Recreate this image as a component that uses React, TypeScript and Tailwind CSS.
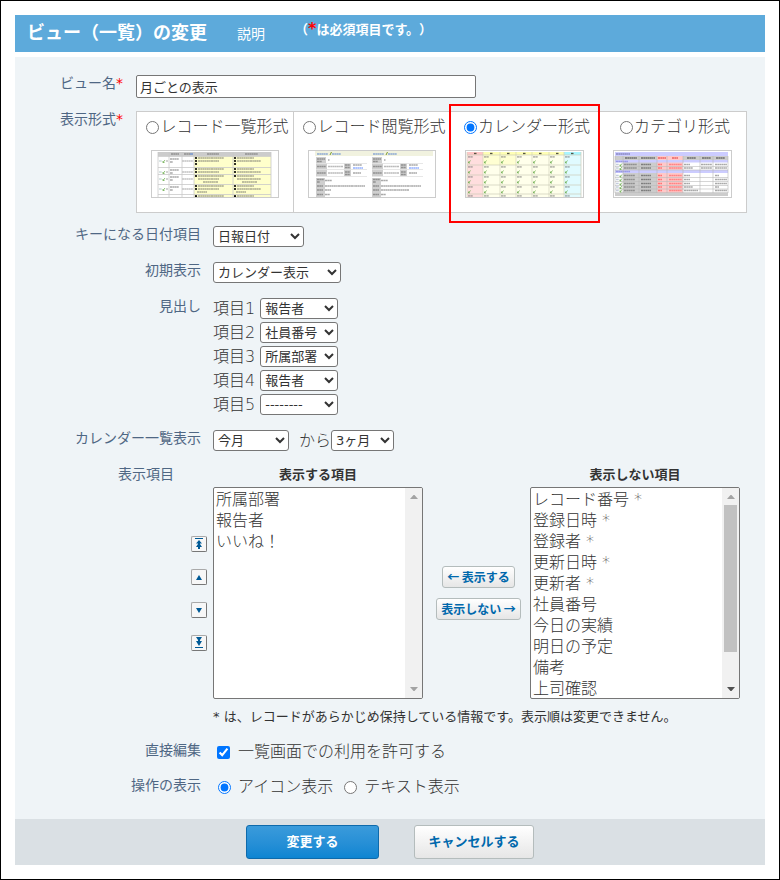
import type { ReactNode } from "react";

const FORM_LABEL = "shrink-0 text-right text-sm leading-4 text-[#4f6784]";
const SELECT =
  "h-[21px] rounded-[3px] border border-[#767676] bg-white pl-0 text-[13px] leading-4 font-normal text-[#333]";

const HEADINGS = ["報告者", "社員番号", "所属部署", "報告者", "--------"];
const SHOWN = ["所属部署", "報告者", "いいね！"];
const HIDDEN = [
  "レコード番号 *",
  "登録日時 *",
  "登録者 *",
  "更新日時 *",
  "更新者 *",
  "社員番号",
  "今日の実績",
  "明日の予定",
  "備考",
  "上司確認",
  "いいね！した人",
  "コメント",
  "添付ファイル",
];

function Scribble({ x, y, w, color = "#555" }: { x: number; y: number; w: number; color?: string }) {
  return (
    <path d={`M${x} ${y}h${w}`} stroke={color} strokeWidth="1.7" strokeDasharray="2.2 .3 1.5 .3" opacity=".5" />
  );
}

function Pencil({ x, y }: { x: number; y: number }) {
  return <path d={`M${x} ${y + 2.5}l2-2.5M${x} ${y + 1}v1.5h1.5`} stroke="#6fae52" strokeWidth=".8" fill="none" />;
}

function ListThumb() {
  const cols = [6, 17, 30, 42, 81, 119];
  const rows = [5, 16, 23, 33, 43];
  return (
    <svg width="126" height="46" viewBox="0 0 126 46" aria-hidden="true">
      <rect x="6" y="1" width="113" height="4" fill="#ccc" />
      <rect x="42" y="5" width="77" height="41" fill="#ffffcb" />
      <Scribble x={19} y={3} w={8} />
      <Scribble x={32} y={3} w={6} />
      <path d="M38 3h3" stroke="#47c" />
      <Scribble x={55} y={3} w={12} />
      <Scribble x={93} y={3} w={13} />
      {rows.map((y, i) => (
        <g key={y}>
          <path d={`M6 ${y}.5h113`} stroke="#c9c9c9" strokeWidth=".8" />
          {i < 4 && (
            <>
              <Scribble x={7} y={y + 5} w={3} color="#9bb" />
              <Pencil x={11} y={y + 4} />
              <Scribble x={14} y={y + 5} w={2} color="#888" />
              <Scribble x={18} y={y + 3} w={9} />
              <Scribble x={18} y={y + 6} w={3} />
              <Scribble x={30} y={y + 5} w={11} color="#888" />
            </>
          )}
          {[43, 82].map((x) => (
            <g key={x}>
              <circle cx={x + 1} cy={y + 2} r="1.1" />
              <Scribble x={x + 3} y={y + 2} w={x === 43 ? 26 : 17} />
              {i < 4 && (
                <>
                  {i !== 2 && <circle cx={x + 1} cy={y + 5} r="1.1" />}
                  <Scribble x={x + 3} y={y + 5} w={x === 43 ? 21 : 24} />
                </>
              )}
              {i === 0 && <circle cx={x + 1} cy={y + 8} r="1.1" />}
              {i === 2 && <Scribble x={x + 8} y={y + 8} w={15} />}
              {i === 3 && <Scribble x={x + 2} y={y + 8} w={10} />}
            </g>
          ))}
        </g>
      ))}
      {cols.map((x) => (
        <path key={x} d={`M${x} 1v45`} stroke="#c9c9c9" strokeWidth=".8" />
      ))}
    </svg>
  );
}

function DetailThumb() {
  return (
    <svg width="126" height="46" viewBox="0 0 126 46" aria-hidden="true">
      <rect x="6" y="0" width="118" height="5" fill="#f1f2df" />
      {[7, 63].map((x) => (
        <g key={x}>
          <Scribble x={x + 1} y={3} w={11} color="#2a62c9" />
          <path d={`M${x + 14} 4l1.5-3`} stroke="#7a9a2a" />
          <Scribble x={x + 16} y={3} w={9} color="#2a62c9" />
          <path
            d={`M${x} 6h10v6H${x}zM${x} 12.500h11v6H${x}zM${x} 19h11v6H${x}zM${x + 28} 12.500h7v6h-7zM${x + 28} 19h7v6h-7zM${x} 27h9v19H${x}z`}
            fill="#cfcfcf"
          />
          <path d={`M${x} 12.500h51M${x} 18.500h51M${x} 25.500h51`} stroke="#ddd" strokeWidth=".7" />
          <Scribble x={x + 1} y={8} w={8} />
          <Scribble x={x + 1} y={10.5} w={5} />
          <Scribble x={x + 12} y={9} w={1.5} />
          <Scribble x={x + 1} y={15.5} w={9} />
          <Scribble x={x + 12} y={15.5} w={15} color="#777" />
          <Scribble x={x + 29} y={14} w={5} />
          <Scribble x={x + 29} y={16.5} w={5} />
          <Scribble x={x + 37} y={14} w={9} />
          <Scribble x={x + 37} y={17} w={10} color="#2a62ff" />
          <Scribble x={x + 1} y={22} w={9} />
          <Scribble x={x + 12} y={22} w={15} color="#777" />
          <Scribble x={x + 29} y={21} w={5} />
          <Scribble x={x + 29} y={23.5} w={5} />
          <Scribble x={x + 37} y={22} w={8} />
          <Scribble x={x + 1} y={28.5} w={7} />
          <Scribble x={x + 1} y={31} w={3} />
          <Scribble x={x + 9} y={29.5} w={7} />
          <Scribble x={x + 1} y={35} w={6} />
          <Scribble x={x + 9} y={35} w={40} />
          <Scribble x={x + 1} y={39} w={6} />
          <Scribble x={x + 9} y={39} w={x === 7 ? 6 : 28} />
          <Scribble x={x + 1} y={43.5} w={6} />
          <Scribble x={x + 9} y={43.5} w={5} />
        </g>
      ))}
    </svg>
  );
}

function CalendarThumb() {
  const cols = [1, 17, 34, 50, 66, 83, 98];
  const rows = [4, 14, 24, 34, 43];
  return (
    <svg width="117" height="46" viewBox="0 0 117 46" aria-hidden="true">
      <rect x="1" y="1" width="16" height="45" fill="#ffdede" />
      <rect x="17" y="1" width="81" height="45" fill="#ffffeb" />
      <rect x="17" y="4" width="33" height="10" fill="#ffffd2" />
      <rect x="98" y="1" width="17" height="45" fill="#e0fbff" />
      <rect x="1" y="1" width="16" height="3" fill="#ffc6c6" />
      <rect x="17" y="1" width="81" height="3" fill="#ffffb4" />
      <rect x="98" y="1" width="17" height="3" fill="#a8f6ff" />
      {cols.map((x) => (
        <g key={x}>
          <path d={`M${x} 1v45`} stroke="#d2d2bc" strokeWidth=".7" />
          <path d={`M${x + 7} 2.500h2.500`} stroke="#554" strokeWidth="1.4" />
          {rows.map((y) => (
            <g key={y}>
              <Scribble x={x + 1} y={y + 1.8} w={5} color="#777" />
              {y < 43 && <Pencil x={x + 1.5} y={y + 5.5} />}
            </g>
          ))}
        </g>
      ))}
      {rows.map((y) => (
        <path key={y} d={`M1 ${y}h114`} stroke="#cbcbb8" strokeWidth=".7" />
      ))}
      <path d="M115 1v45" stroke="#cbcbb8" strokeWidth=".7" />
    </svg>
  );
}

function CategoryThumb() {
  const cols = [1, 9, 25, 43, 53, 69, 86, 99, 114];
  const rows = [12, 15.5, 23, 27, 31, 34.5, 38];
  return (
    <svg width="117" height="46" viewBox="0 0 117 46" aria-hidden="true">
      <rect x="1" y="1" width="113" height="44" fill="#ccc" />
      <rect x="1" y="1" width="113" height="4" fill="#ccccff" />
      <rect x="1" y="9" width="8" height="33" fill="#fff" />
      <rect x="69" y="9" width="45" height="33" fill="#fff" />
      <rect x="43" y="5" width="26" height="37" fill="#ffc9c9" />
      <rect x="1" y="9" width="113" height="2.500" fill="#ccccff" />
      <rect x="1" y="19" width="113" height="3" fill="#ccccff" />
      <Scribble x={2} y={3} w={14} color="#448" />
      <Scribble x={11} y={7} w={12} color="#111" />
      <Scribble x={27} y={7} w={14} color="#111" />
      <Scribble x={44} y={7} w={8} color="#d00" />
      <Scribble x={58} y={7} w={6} color="#d00" />
      <Scribble x={73} y={7} w={9} color="#111" />
      <Scribble x={88} y={7} w={9} color="#111" />
      <Scribble x={102} y={7} w={9} color="#111" />
      <Scribble x={2} y={10.5} w={12} color="#66c" />
      <Scribble x={2} y={20.5} w={14} color="#66c" />
      {rows.map((y, i) => (
        <g key={y}>
          <path d={`M1 ${y + 3.5}h113`} stroke="#bbb" strokeWidth=".6" />
          <Scribble x={2} y={y + 1.5} w={3} color="#89b" />
          <Pencil x={6} y={y + 0.5} />
          <Scribble x={10} y={y + 1.5} w={i < 2 ? 13 : 11} />
          <Scribble x={27} y={y + 1.5} w={10} color="#333" />
          <Scribble x={44} y={y + 1.5} w={4} color="#f22" />
          <Scribble x={55} y={y + 1.5} w={13} color="#f44" />
          <Scribble x={70} y={y + 1.5} w={i === 6 ? 14 : i % 4 === 1 ? 9 : 6} />
          {i < 2 && <Scribble x={87} y={y + 1.5} w={11} />}
          <Scribble x={101} y={y + 1.5} w={i % 3 === 2 ? 4 : 12} />
        </g>
      ))}
      {cols.map((x) => (
        <path key={x} d={`M${x} 5v37`} stroke="#b5b5b5" strokeWidth=".6" />
      ))}
    </svg>
  );
}

const FORMATS = [
  { name: "レコード一覧形式", thumb: <ListThumb /> },
  { name: "レコード閲覧形式", thumb: <DetailThumb /> },
  { name: "カレンダー形式", thumb: <CalendarThumb />, active: true },
  { name: "カテゴリ形式", thumb: <CategoryThumb /> },
];

function FormatPicker() {
  return (
    <div role="radiogroup" aria-label="表示形式" className="flex border border-l-0 border-[#ccc] bg-white">
      {FORMATS.map(({ name, thumb, active }) => (
        <label
          key={name}
          className="relative flex flex-col items-center border-l border-[#ccc] px-3.5 pt-[3px] pb-3.5 text-base leading-6 font-light whitespace-nowrap"
        >
          <span className="-mx-3 flex items-center pl-[5px]">
            <input type="radio" name="format" defaultChecked={active} className="mr-px size-[13px]" />
            {name}
          </span>
          <span className="mt-[11px] block border border-[#ccc] bg-white [&>svg]:block">{thumb}</span>
          {active && <span className="absolute -inset-x-0.5 -top-2 -bottom-[11px] z-10 border-2 border-[#f00]" />}
        </label>
      ))}
    </div>
  );
}

function Row({ label, htmlFor, children }: { label: string; htmlFor?: string; children: ReactNode }) {
  return (
    <div className="flex items-start gap-3">
      <label htmlFor={htmlFor} className={`w-[186px] ${FORM_LABEL}`}>
        {label}
      </label>
      <div className="text-base leading-5 font-light">{children}</div>
    </div>
  );
}

function ListBox({ title, id, items, scrollable }: { title: string; id: string; items: string[]; scrollable?: boolean }) {
  return (
    <div className="w-[210px] shrink-0">
      <label htmlFor={id} className="block pt-px text-center text-[13px] leading-4 font-bold">
        {title}
      </label>
      <div className="mt-1 flex h-[212px] overflow-hidden rounded-[2px] border border-[#767676] bg-white">
        <select
          id={id}
          multiple
          size={10}
          className="-mt-0.5 min-w-0 flex-1 overflow-y-auto text-base text-[#333] [scrollbar-width:none]"
        >
          {items.map((item) => (
            <option key={item} className="h-[21px] min-h-0 px-0.5 py-0 font-light">
              {item}
            </option>
          ))}
        </select>
        <div aria-hidden="true" className="flex w-[17px] shrink-0 flex-col items-center bg-[#f1f1f1]">
          <svg width="17" height="17" viewBox="0 0 17 17">
            <path d="M5 11l3.500-4h1L13 11z" fill="#a3a3a3" />
          </svg>
          <div className="flex w-[13px] flex-1 flex-col">
            {scrollable && <div className="h-5/6 bg-[#c1c1c1]" />}
          </div>
          <svg width="17" height="17" viewBox="0 0 17 17">
            <path d="M5 6l3.500 4h1L13 6z" fill={scrollable ? "#505050" : "#a3a3a3"} />
          </svg>
        </div>
      </div>
    </div>
  );
}

const MOVES = [
  { label: "先頭へ", d: "M4 1h8v1H4zM8 3l3 3.500H9V7l2 3H9v2H7v-2H5l2-3v-.5H5z" },
  { label: "上へ", d: "M8 5l3 5H5z" },
  { label: "下へ", d: "M5 5h6l-3 5z" },
  { label: "末尾へ", d: "M4 11h8v1H4zM5 1h6L9 4v1h2l-3 5-3-5h2V4z" },
];

function MoveButton({ label, d }: { label: string; d: string }) {
  return (
    <button
      type="button"
      aria-label={label}
      className="size-4 rounded-[2px] border border-[#a9a9a9] border-r-[#777] border-b-[#777] bg-[#f7f7f7]"
    >
      <svg width="14" height="14" viewBox="1 0 14 14" fill="#005a96">
        <path d={d} />
      </svg>
    </button>
  );
}

const SMALL_BUTTON =
  "flex h-[22px] items-center rounded-[3px] border border-[#b4bcbc] bg-linear-to-b from-white to-[#e6e6e6] px-1 font-['Noto_Sans_CJK_JP',sans-serif] text-xs font-bold whitespace-nowrap text-[#0068ac]";

export default function App() {
  return (
    <main className="border border-black bg-white p-3.5 font-['DejaVu_Sans','Noto_Sans_CJK_JP',sans-serif] text-[#333]">
      <header className="flex h-[37px] bg-[#5daadb] pl-3 whitespace-nowrap text-white">
        <h1 className="text-lg leading-9 font-bold">ビュー（一覧）の変更</h1>
        <a href="#help" className="ml-[30px] text-sm leading-[38px]">
          説明
        </a>
        <p className="ml-[30px] text-[13px] leading-[30px] font-bold [text-spacing-trim:space-all]">
          （<span className="text-base leading-4 text-[#f00]">*</span>は必須項目です。）
        </p>
      </header>

      <form className="mt-[5px]" onSubmit={(e) => e.preventDefault()}>
        <div className="flex flex-col gap-[15px] bg-[#eff4f7] pt-[18px] pb-[22px]">
          <div className="flex flex-col gap-[13px]">
            <div className="flex items-start gap-[13px]">
              <label htmlFor="view-name" className={`w-[108px] ${FORM_LABEL}`}>
                ビュー名<span className="text-[#f00]">*</span>
              </label>
              <input
                id="view-name"
                defaultValue="月ごとの表示"
                className="h-[23px] w-[340px] rounded-[2px] border border-[#767676] bg-white px-[3px] text-[13px]"
              />
            </div>
            <div className="flex items-start gap-[13px]">
              <span className={`w-[108px] ${FORM_LABEL}`}>
                表示形式<span className="text-[#f00]">*</span>
              </span>
              <FormatPicker />
            </div>
            <Row label="キーになる日付項目" htmlFor="date-field">
              <select id="date-field" className={`block w-[91px] ${SELECT}`}>
                <option>日報日付</option>
              </select>
            </Row>
          </div>

          <Row label="初期表示" htmlFor="initial-view">
            <select id="initial-view" className={`block w-32 ${SELECT}`}>
              <option>カレンダー表示</option>
            </select>
          </Row>

          <Row label="見出し">
            <div className="flex flex-col gap-[3px]">
              {HEADINGS.map((value, i) => (
                <label key={i} className="flex items-center gap-[5px]">
                  項目{i + 1}
                  <select className={`w-[78px] ${SELECT}`}>
                    <option>{value}</option>
                  </select>
                </label>
              ))}
            </div>
          </Row>

          <Row label="カレンダー一覧表示" htmlFor="from-month">
            <div className="flex items-center">
              <select id="from-month" className={`mr-2.5 w-[76px] ${SELECT}`}>
                <option>今月</option>
              </select>
              <label htmlFor="span">から</label>
              <select id="span" className={`w-[63px] ${SELECT}`}>
                <option>3ヶ月</option>
              </select>
            </div>
          </Row>

          <div>
            <div className="flex items-start">
              <span className={`w-[159px] ${FORM_LABEL}`}>表示項目</span>
              <div className="mr-1.5 ml-[17px] flex flex-col gap-[17px] pt-[70px]">
                {MOVES.map((move) => (
                  <MoveButton key={move.label} {...move} />
                ))}
              </div>
              <ListBox title="表示する項目" id="shown" items={SHOWN} />
              <div className="flex w-[107px] flex-col items-center gap-2.5 pt-[100px] pl-1">
                <button type="button" className={SMALL_BUTTON}>
                  ← 表示する
                </button>
                <button type="button" className={SMALL_BUTTON}>
                  表示しない →
                </button>
              </div>
              <ListBox title="表示しない項目" id="hidden" items={HIDDEN} scrollable />
            </div>
            <p className="mt-2 pl-[198px] text-[13px] leading-5">
              * は、レコードがあらかじめ保持している情報です。表示順は変更できません。
            </p>
          </div>

          <Row label="直接編集" htmlFor="inline-edit">
            <label className="flex items-center">
              <input id="inline-edit" type="checkbox" defaultChecked className="mr-2 ml-1 size-[13px]" />
              一覧画面での利用を許可する
            </label>
          </Row>

          <Row label="操作の表示">
            <div className="flex items-center gap-[11px]">
              <label className="flex items-center">
                <input type="radio" name="action" defaultChecked className="mr-[7px] ml-[5px] size-[13px]" />
                アイコン表示
              </label>
              <label className="flex items-center">
                <input type="radio" name="action" className="mr-[7px] size-[13px]" />
                テキスト表示
              </label>
            </div>
          </Row>
        </div>

        <div className="flex justify-center gap-[35px] bg-[#dae0e4] py-1.5 text-[13px] font-bold">
          <button
            type="submit"
            className="h-[34px] w-[133px] rounded-[3px] border border-[#0e6aab] bg-linear-to-b from-[#3a9bdb] to-[#0d85d2] text-white"
          >
            変更する
          </button>
          <button
            type="button"
            className="h-[34px] w-[120px] rounded-[3px] border border-[#b4bcbc] bg-linear-to-b from-white to-[#e6e6e6] text-[#0068ac]"
          >
            キャンセルする
          </button>
        </div>
      </form>
    </main>
  );
}
